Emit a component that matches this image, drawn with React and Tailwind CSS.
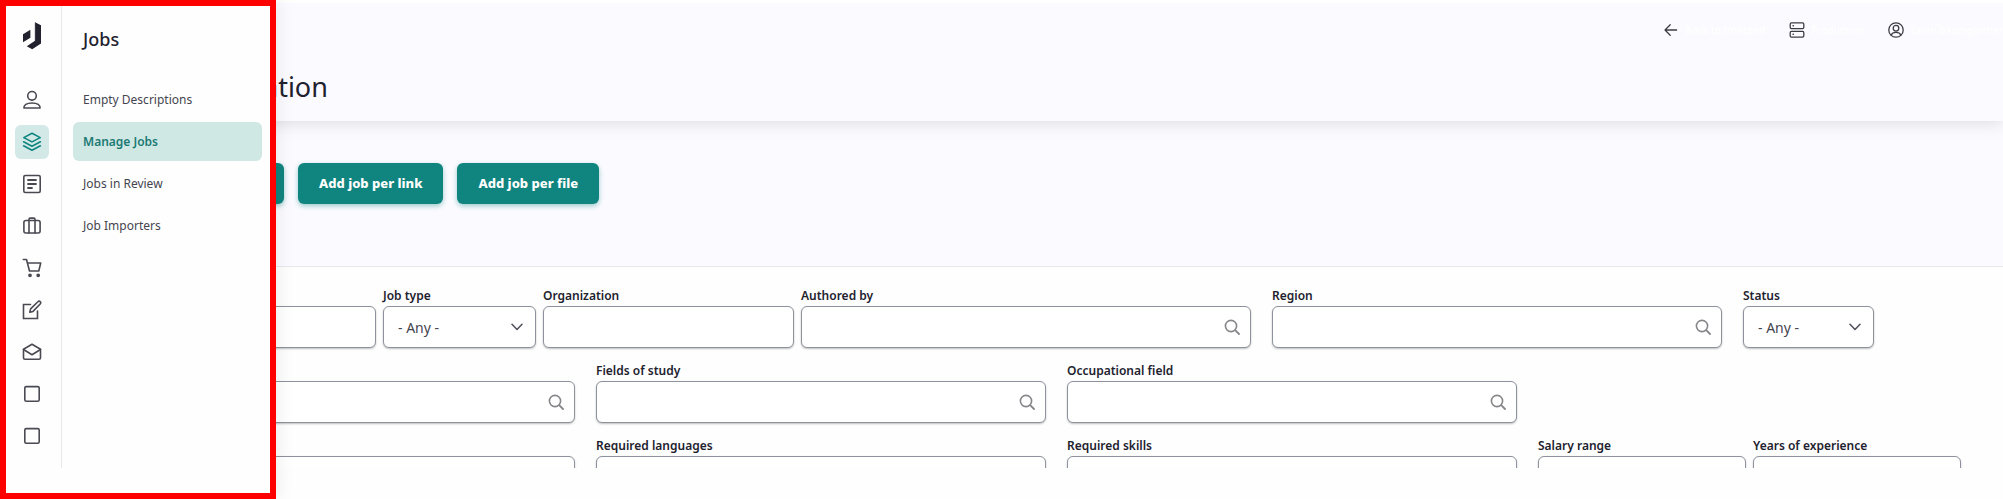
import React, { useId } from 'react';

const stroke = {
  fill: 'none',
  stroke: 'currentColor',
  strokeWidth: 1.6,
  strokeLinejoin: 'round',
  strokeLinecap: 'round',
};

function Icon({ children, className = 'size-5' }) {
  return (
    <svg viewBox="0 0 20 20" className={className} aria-hidden="true" {...stroke}>
      {children}
    </svg>
  );
}

const railItems = [
  {
    name: 'People',
    icon: (
      <>
        <circle cx="10" cy="5.8" r="4.3" />
        <path d="M1.9 18c-.2-3 2.600-5 8.100-5s8.300 2 8.100 5z" />
      </>
    ),
  },
  {
    name: 'Jobs',
    active: true,
    icon: (
      <>
        <path d="M10 1.300 18.200 5.600 10 9.900 1.800 5.600z" />
        <path d="M1.600 9.800 10 14.200l8.400-4.400M1.600 13.800 10 18.200l8.400-4.400" />
      </>
    ),
  },
  {
    name: 'Content',
    icon: (
      <>
        <rect x="1.800" y="1.500" width="16.400" height="17" rx="1.500" />
        <path d="M6 6h8M6 10h8M6 14h4" strokeWidth="1.800" />
      </>
    ),
  },
  {
    name: 'Organizations',
    icon: (
      <>
        <rect x="1.900" y="4.500" width="16.200" height="12.500" rx="2" />
        <path d="M7 17V3.300A1.200 1.200 0 0 1 8.200 2.100h3.600A1.200 1.200 0 0 1 13 3.300V17" />
      </>
    ),
  },
  {
    name: 'Commerce',
    icon: (
      <>
        <path d="M1.300 1.500h3.200l3 11.500h9.300l1.900-8H5.500" />
        <circle cx="8" cy="17.300" r="1.100" fill="currentColor" />
        <circle cx="16.200" cy="17.300" r="1.100" fill="currentColor" />
      </>
    ),
  },
  {
    name: 'Structure',
    icon: (
      <>
        <path d="M8.500 4.500h-7v14h14v-7.500" strokeLinejoin="miter" />
        <path d="M7.800 12.300l.8-3.400 7.300-7.200a1.500 1.500 0 0 1 2.300 0 1.500 1.500 0 0 1 0 2.300l-7.200 7.400z" />
      </>
    ),
  },
  {
    name: 'Messages',
    icon: (
      <>
        <path d="M1.500 7.300 10 2.300l8.500 5v8.500a1.500 1.500 0 0 1-1.500 1.500H3a1.500 1.500 0 0 1-1.500-1.500z" />
        <path d="M1.500 7.500 10 12.800l8.500-5.300" />
      </>
    ),
  },
  { name: 'Reports', icon: <rect x="2.800" y="2.600" width="14.400" height="14.600" rx="1.500" /> },
  { name: 'Settings', icon: <rect x="2.800" y="2.600" width="14.400" height="14.600" rx="1.500" /> },
];

const menuItems = [
  { label: 'Empty Descriptions' },
  { label: 'Manage Jobs', active: true },
  { label: 'Jobs in Review' },
  { label: 'Job Importers' },
];

function Logo() {
  return (
    <svg viewBox="0 0 20 28" className="h-7 w-5" aria-hidden="true" fill="#22222e">
      <path d="M1 12.300 8.400 7.800v8L1 20.300z" />
      <path d="M13 .3l6 3v18.200l-8.800 5.800-5.400-3L13 18.800z" />
      <path d="M13.200.5v18.300" stroke="#565664" strokeWidth=".6" />
    </svg>
  );
}

function Sidebar() {
  return (
    <aside className="absolute inset-y-0 left-0 z-10 flex w-[276px] border-[6px] border-[#ff0000] bg-[#fefefe] shadow-[2px_0_16px_rgba(0,0,0,0.08)]">
      <nav
        aria-label="Main"
        className="mb-[25px] flex w-14 shrink-0 flex-col items-center border-r border-[#e9e9ea] pt-4 pr-[3px]"
      >
        <a href="#home" aria-label="Home" className="mb-[33px]">
          <Logo />
        </a>
        <ul className="flex flex-col gap-2">
          {railItems.map((item) => (
            <li key={item.name}>
              <a
                href="#section"
                aria-label={item.name}
                className={
                  item.active
                    ? 'flex size-[34px] items-center justify-center rounded-md bg-[#d2e9e7] text-[#10857f]'
                    : 'flex size-[34px] items-center justify-center rounded-md text-[#4a4a52]'
                }
              >
                <Icon>{item.icon}</Icon>
              </a>
            </li>
          ))}
        </ul>
      </nav>
      <div className="min-w-0 flex-1 pt-[21px] pr-2 pl-[11px]">
        <h2 className="px-[10px] text-lg leading-6 font-medium text-[#22222e]">Jobs</h2>
        <ul className="mt-[29px] flex flex-col gap-[3px]">
          {menuItems.map((item) => (
            <li key={item.label}>
              <a
                href="#menu"
                className={
                  item.active
                    ? 'block rounded-md bg-[#cfe8e4] px-[10px] pt-px text-xs leading-[38px] font-semibold text-[#1b7a74]'
                    : 'block rounded-md px-[10px] pt-px text-xs leading-[38px] text-[#45454f]'
                }
              >
                {item.label}
              </a>
            </li>
          ))}
        </ul>
      </div>
    </aside>
  );
}

function HeaderLink({ icon, children }) {
  return (
    <a href="#account" className="flex items-center gap-1.5 text-[10px] font-medium text-white">
      <span className="text-[#3c3c44]">{icon}</span>
      {children}
    </a>
  );
}

function Header() {
  return (
    <header className="relative h-[118px] shrink-0 bg-[#fbfaff] shadow-[0_4px_14px_rgba(0,0,0,0.1)]">
      <nav aria-label="Account" className="flex h-[54px] items-center justify-end gap-6">
        <HeaderLink
          icon={
            <Icon className="size-4">
              <path d="M17 10H2.500M9 3.500 2.500 10 9 16.500" />
            </Icon>
          }
        >
          Back to frontend
        </HeaderLink>
        <HeaderLink
          icon={
            <Icon className="size-4">
              <rect x="1.500" y="1.200" width="17" height="7" rx="1.500" />
              <rect x="1.500" y="11.800" width="17" height="7" rx="1.500" />
              <path d="M5 4.700h.5M5 15.300h.5" />
            </Icon>
          }
        >
          Production
        </HeaderLink>
        <HeaderLink
          icon={
            <Icon className="size-4">
              <circle cx="10" cy="10" r="9" />
              <circle cx="10" cy="7.800" r="3.500" />
              <path d="M4 16.300c1-2.500 3-3.300 6-3.300s5 .8 6 3.300" />
            </Icon>
          }
        >
          sarah.baumgartner
        </HeaderLink>
      </nav>
      <h1 className="pl-[263px] text-[27px] leading-[60px] text-[#22222e]">ation</h1>
    </header>
  );
}

function ActionButton({ children, className = '', ...rest }) {
  return (
    <button
      type="button"
      className={`h-[41px] rounded-md bg-[#10847e] px-[21px] text-[13px] font-extrabold text-white shadow-[0_2px_5px_rgba(16,132,126,0.4)] ${className}`}
      {...rest}
    >
      {children}
    </button>
  );
}

const box =
  'h-[42px] w-full rounded-md border border-[#8e929c] bg-white text-sm text-[#45454f] shadow-[0_1px_2px_rgba(0,0,0,0.25)]';

function Field({ label, hiddenLabel, kind = 'text', className }) {
  const id = useId();
  return (
    <div className={className}>
      <label
        htmlFor={id}
        className="block h-[22px] text-xs leading-6 font-semibold whitespace-nowrap text-[#22222e]"
      >
        {label}
      </label>
      <div className="relative">
        {kind === 'select' ? (
          <select id={id} className={`${box} appearance-none pt-0.5 pl-[14px]`}>
            <option>- Any -</option>
          </select>
        ) : (
          <input id={id} type="text" aria-label={hiddenLabel} className={`${box} px-3`} />
        )}
        {kind === 'select' && (
          <svg
            viewBox="0 0 12 12"
            className="pointer-events-none absolute top-[15px] right-[13px] size-3 text-[#55555f]"
            aria-hidden="true"
            {...stroke}
          >
            <path d="M1 3.300 6 8.500l5-5.200" />
          </svg>
        )}
        {kind === 'search' && (
          <svg
            viewBox="0 0 16 16"
            className="pointer-events-none absolute top-[13px] right-[11px] size-4 text-[#86868a]"
            aria-hidden="true"
            {...stroke}
          >
            <circle cx="7" cy="7" r="5.600" />
            <path d="M11.200 11.200 15 15" strokeWidth="1.800" />
          </svg>
        )}
      </div>
    </div>
  );
}

const short = 'w-[251px] shrink-0';
const wide = 'mr-[14px] w-[450px] shrink-0';

function Filters() {
  return (
    <form className="flex flex-1 flex-col gap-[11px] border-t border-[#e8e8ec] bg-[#fefefe] pt-[17px] pl-[125px]">
      <div className="flex gap-[7px]">
        <Field label={'\u00a0'} hiddenLabel="Title" className={short} />
        <Field label="Job type" kind="select" className="w-[153px] shrink-0" />
        <Field label="Organization" className={short} />
        <Field label="Authored by" kind="search" className={wide} />
        <Field label="Region" kind="search" className={wide} />
        <Field label="Status" kind="select" className="w-[131px] shrink-0" />
      </div>
      <div className="flex gap-[7px]">
        <Field label={'\u00a0'} hiddenLabel="Category" kind="search" className={wide} />
        <Field label="Fields of study" kind="search" className={wide} />
        <Field label="Occupational field" kind="search" className={wide} />
      </div>
      <div className="flex gap-[7px]">
        <Field label={'\u00a0'} hiddenLabel="Benefits" kind="text" className={wide} />
        <Field label="Required languages" className={wide} />
        <Field label="Required skills" className={wide} />
        <Field label="Salary range" className="w-[208px] shrink-0" />
        <Field label="Years of experience" className="w-[208px] shrink-0" />
      </div>
    </form>
  );
}

export default function App() {
  return (
    <div className="relative h-screen overflow-hidden bg-[#fefefe] pt-[3px] pb-[31px] font-['Noto_Sans','Open_Sans',sans-serif]">
      <Sidebar />
      <main className="flex h-full flex-col overflow-hidden bg-[#fafaff]">
        <Header />
        <div className="flex gap-[14px] pt-[42px] pb-[62px] pl-[125px]">
          <ActionButton className="w-[159px]" aria-label="Add job" />
          <ActionButton>Add job per link</ActionButton>
          <ActionButton>Add job per file</ActionButton>
        </div>
        <Filters />
      </main>
    </div>
  );
}
